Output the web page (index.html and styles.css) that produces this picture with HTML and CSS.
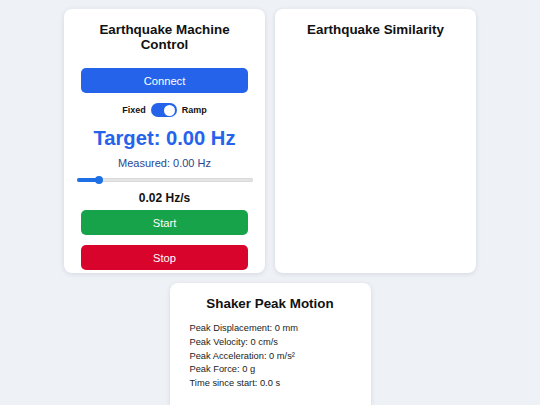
FILE: index.html
```html
<!DOCTYPE html>
<html lang="en">
<head>
<meta charset="utf-8">
<title>Earthquake Machine</title>
<link rel="stylesheet" href="styles.css">
</head>
<body>
<div class="wrap">
  <section class="card control">
    <h2 class="title">Earthquake Machine Control</h2>
    <button class="btn btn-blue connect">Connect</button>
    <div class="toggle-row">
      <span class="toggle-label">Fixed</span>
      <span class="switch"><span class="knob"></span></span>
      <span class="toggle-label">Ramp</span>
    </div>
    <div class="target">Target: 0.00 Hz</div>
    <div class="measured">Measured: 0.00 Hz</div>
    <div class="slider">
      <div class="slider-fill"><span class="slider-thumb"></span></div>
    </div>
    <div class="rate">0.02 Hz/s</div>
    <button class="btn btn-green start">Start</button>
    <button class="btn btn-red stop">Stop</button>
  </section>
  <section class="card similarity">
    <h2 class="title">Earthquake Similarity</h2>
  </section>
  <section class="card peak">
    <h2 class="title">Shaker Peak Motion</h2>
    <ul class="stats">
      <li>Peak Displacement: 0 mm</li>
      <li>Peak Velocity: 0 cm/s</li>
      <li>Peak Acceleration: 0 m/s²</li>
      <li>Peak Force: 0 g</li>
      <li>Time since start: 0.0 s</li>
    </ul>
  </section>
</div>
</body>
</html>
```

FILE: styles.css
```css
* { box-sizing: border-box; }

html, body {
  margin: 0;
  padding: 0;
  background: #eef1f6;
  font-family: "Liberation Sans", Arial, sans-serif;
  color: #111;
}

.wrap {
  display: flex;
  flex-wrap: wrap;
  justify-content: center;
  gap: 10px;
  padding-top: 9px;
}

.card {
  width: 201px;
  background: #fff;
  border-radius: 8px;
  box-shadow: 0 1px 5px rgba(30, 40, 70, 0.12);
  padding: 13px 13px 3px;
  display: flex;
  flex-direction: column;
}

.title {
  margin: 0;
  font-size: 13.4px;
  line-height: 15px;
  font-weight: bold;
  text-align: center;
  color: #111;
}

.btn {
  display: block;
  border: 0;
  border-radius: 5px;
  height: 25px;
  margin: 0 4px;
  font-family: inherit;
  font-size: 11.2px;
  color: #fff;
  padding: 0;
}

.btn-blue { background: #2563eb; }
.btn-green { background: #16a34a; }
.btn-red { background: #d9042b; }

.connect { margin-top: 16px; }

.toggle-row {
  margin-top: 10px;
  height: 14px;
  display: flex;
  align-items: center;
  justify-content: center;
  gap: 5px;
}

.toggle-label {
  font-size: 9px;
  font-weight: bold;
  color: #111;
}

.switch {
  width: 26px;
  height: 14px;
  border-radius: 7px;
  background: #2563eb;
  display: flex;
  align-items: center;
  justify-content: flex-end;
  padding: 0 1.5px;
}

.knob {
  width: 11px;
  height: 11px;
  border-radius: 50%;
  background: #fff;
}

.target {
  margin-top: 10px;
  font-size: 20.2px;
  line-height: 23px;
  font-weight: bold;
  color: #2563eb;
  text-align: center;
}

.measured {
  margin-top: 7px;
  font-size: 11px;
  line-height: 12px;
  color: #2a4690;
  text-align: center;
}

.slider {
  margin-top: 9px;
  margin-right: -1px;
  height: 4px;
  border-radius: 2px;
  background: #e4e4e4;
  box-shadow: inset 0 0 0 0.5px #d0d0d0;
  display: flex;
  align-items: center;
}

.slider-fill {
  width: 22px;
  height: 4px;
  border-radius: 2px;
  background: #1f6fe5;
  display: flex;
  align-items: center;
  justify-content: flex-end;
}

.slider-thumb {
  width: 8px;
  height: 8px;
  border-radius: 50%;
  background: #1f6fe5;
  margin-right: -4px;
}

.rate {
  margin-top: 9px;
  font-size: 12px;
  line-height: 14px;
  font-weight: bold;
  text-align: center;
  color: #111;
}

.start { margin-top: 5px; }
.stop { margin-top: 10px; }

.peak {
  padding-bottom: 24px;
}

.stats {
  list-style: none;
  margin: 11px 0 0;
  padding: 0 0 0 7px;
  font-size: 9.3px;
  line-height: 13.75px;
  color: #222;
}
```
